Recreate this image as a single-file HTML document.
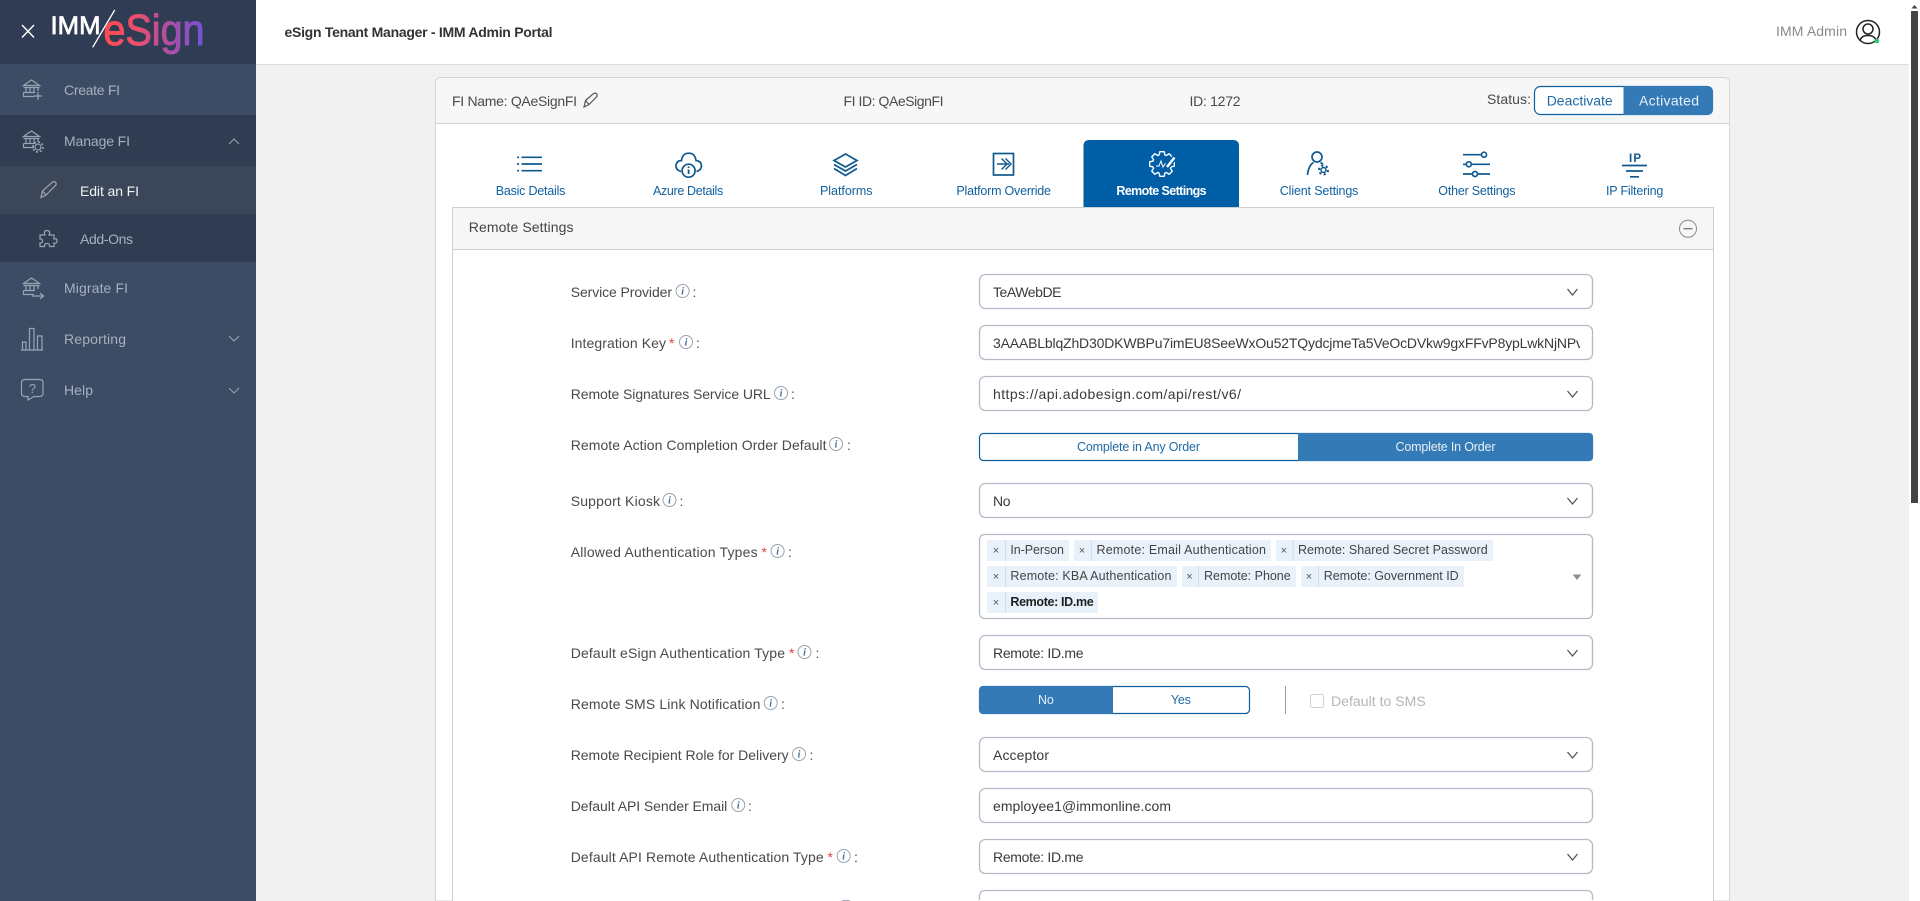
<!DOCTYPE html>
<html lang="en">
<head>
<meta charset="utf-8">
<title>eSign Tenant Manager - IMM Admin Portal</title>
<style>
html,body{margin:0;padding:0;width:1920px;height:901px;overflow:hidden;background:#f1f1f1}
svg{display:block}
text{font-family:"Liberation Sans",sans-serif}
.nav{font-size:14px;fill:#a6b0bf}
.lab{font-size:14px;fill:#4a4a4a}
.inp{font-size:14px;fill:#3a3a3a}
.tab{font-size:12.5px;fill:#11609f}
.tag{font-size:12.5px;fill:#444}
.x{font-size:11px;fill:#555;text-anchor:middle}
.box{fill:#fff;stroke:#b7bac6;stroke-width:1.3}
.chev{fill:none;stroke:#555;stroke-width:1.3}
.ic{fill:none;stroke:#9aa5b4;stroke-width:1.2}
.tb{fill:none;stroke:#10598f;stroke-width:1.7}
.info circle{fill:#fff;stroke:#9aa3ad;stroke-width:1}
.info text{font-size:10px;font-style:italic;font-weight:bold;fill:#3f6f9f;text-anchor:middle;font-family:"Liberation Serif",serif}
.star{font-size:14px;fill:#e04040}
</style>
</head>
<body>
<svg width="1920" height="901" viewBox="0 0 1920 901" xmlns="http://www.w3.org/2000/svg">
<defs>
<linearGradient id="lg" x1="104" y1="0" x2="205" y2="0" gradientUnits="userSpaceOnUse">
<stop offset="0" stop-color="#ff4a50"/><stop offset=".35" stop-color="#e64f6e"/><stop offset=".65" stop-color="#aa4fa6"/><stop offset="1" stop-color="#6e52d8"/>
</linearGradient>
<clipPath id="kc"><rect x="985" y="326" width="595" height="34"/></clipPath>
<g id="bank" fill="none" stroke="#9aa5b4" stroke-width="1.2">
<path d="M1.5 6.5 L9.5 1 L17.5 6.5 Z"/><path d="M1.5 8.5H17.5M4 8.5V13.5M8 8.5V13.5M12 8.5V13.5M16 8.5V12M1.5 13.5H13M1.5 13.5V17.5H12"/>
</g>
<g id="i" class="info"><circle cx="0" cy="0" r="6.5"/><text x="0" y="3.5">i</text></g>
<path id="ch" class="chev" d="M-5 -3 L0 3 L5 -3"/>
</defs>

<!-- page -->
<rect width="1920" height="901" fill="#f1f1f1"/>
<rect x="256" y="0" width="1653" height="64" fill="#fff"/>
<rect x="256" y="64" width="1653" height="1" fill="#d9dce1"/>
<rect x="1909" y="0" width="11" height="901" fill="#fff"/>
<rect x="1911" y="11" width="7" height="492" fill="#444"/>
<path d="M1914.5 5 L1911.5 8.5 H1917.5Z" fill="#444"/>

<!-- sidebar -->
<rect width="256" height="901" fill="#3c4c64"/>
<rect width="256" height="64" fill="#303c54"/>
<rect y="115" width="256" height="147" fill="#2f3c51"/>
<rect y="166" width="256" height="48" fill="#3b4658"/>

<path d="M22 25 L34 37.5 M34 25 L22 37.5" stroke="#fff" stroke-width="1.4"/>
<text x="50.500" y="34" font-size="25" fill="#fff" stroke="#fff" stroke-width=".7" textLength="50" lengthAdjust="spacingAndGlyphs">IMM</text>
<path d="M114.700 10 L92.700 47.300" stroke="#fff" stroke-width="1.300"/>
<text x="103.500" y="45" font-size="44" fill="url(#lg)" stroke="url(#lg)" stroke-width="1" textLength="101" lengthAdjust="spacingAndGlyphs">eSign</text>

<use href="#bank" x="22" y="79"/>
<path class="ic" d="M38 92V100M34 96H42"/>
<text class="nav" x="64" y="95" textLength="56">Create FI</text>

<use href="#bank" x="22" y="130"/>
<circle class="ic" cx="38" cy="147" r="3"/><circle cx="38" cy="147" r="5" fill="none" stroke="#9aa5b4" stroke-width="1.6" stroke-dasharray="2 1.9"/>
<text class="nav" x="64" y="146" textLength="66">Manage FI</text>
<path d="M229 144 L234 139 L239 144" fill="none" stroke="#9aa5b4" stroke-width="1"/>

<path class="ic" d="M41 197.500 L42.500 191 L52.500 182 Q55 181 56 183 Q56.500 185 55 186 L46 195 Z M42.500 191 L46 195"/>
<text x="80" y="196" font-size="14" fill="#eef1f5" textLength="59">Edit an FI</text>

<path class="ic" d="M40 235 H45 Q43 230.500 47 230.500 Q51 230.500 49 235 H54 V239 Q57.500 238 57 241 Q56.500 244 54 243 V246.500 H49.500 Q50 243.500 47 243.500 Q44 243.500 44.500 246.500 H40 V243 Q43 243 42.500 240.500 Q42 238.500 40 239Z"/>
<text class="nav" x="80" y="244" textLength="53">Add-Ons</text>

<use href="#bank" x="22" y="277"/>
<path class="ic" d="M32 296H43M40 293L43.500 296L40 299"/>
<text class="nav" x="64" y="293" textLength="64">Migrate FI</text>

<path class="ic" d="M21 350H43M22.500 350V342H26V350M29.500 350V328.500H34V350M37.500 350V336H42V350"/>
<text class="nav" x="64" y="344" textLength="62">Reporting</text>
<path d="M229 336 L234 341 L239 336" fill="none" stroke="#9aa5b4" stroke-width="1"/>

<path class="ic" d="M25 379.500H39.500Q43 379.500 43 383V393Q43 396.500 39.500 396.500H34L28 400V396.500H25Q21.500 396.500 21.500 393V383Q21.500 379.500 25 379.500Z"/>
<text x="32.500" y="393" font-size="13" fill="#9aa5b4" text-anchor="middle">?</text>
<text class="nav" x="64" y="395" textLength="29">Help</text>
<path d="M229 388 L234 393 L239 388" fill="none" stroke="#9aa5b4" stroke-width="1"/>

<!-- header -->
<text x="284.500" y="37" font-size="14" font-weight="bold" fill="#333" textLength="268">eSign Tenant Manager - IMM Admin Portal</text>
<text x="1776" y="36" font-size="14" fill="#8a8a8a" textLength="71">IMM Admin</text>
<circle cx="1868" cy="32" r="11.500" fill="none" stroke="#222" stroke-width="1.500"/>
<circle cx="1868" cy="29" r="5" fill="none" stroke="#222" stroke-width="1.500"/>
<path d="M1860 41 Q1861 35.500 1868 35.500 Q1875 35.500 1876 41" fill="none" stroke="#222" stroke-width="1.500"/>
<circle cx="1877" cy="41" r="2.300" fill="#2ecc71"/>

<!-- card -->
<path d="M435.500 901V83.500Q435.500 77.500 441.500 77.500H1723.500Q1729.500 77.500 1729.500 83.500V901Z" fill="#fff" stroke="#d6d6d6"/>
<path d="M436 123V84Q436 78 442 78H1723.500Q1729 78 1729 84V123Z" fill="#f7f7f7"/>
<rect x="436" y="123" width="1294" height="1" fill="#d2d2d2"/>
<text class="lab" x="452" y="106" textLength="125">FI Name: QAeSignFI</text>
<path d="M584 107 L585.500 100.500 L593.500 93.500 Q596 92.500 597 94.500 Q597.500 96 596 97.500 L589 104.500 Z M585.500 100.500 L589 104.500" fill="none" stroke="#555" stroke-width="1.200"/>
<text class="lab" x="843.500" y="106" textLength="100">FI ID: QAeSignFI</text>
<text class="lab" x="1189.500" y="106" textLength="51">ID: 1272</text>
<text class="lab" x="1487" y="104" textLength="44">Status:</text>
<rect x="1534.500" y="86.500" width="178" height="28" rx="6" fill="#fff" stroke="#0f5f9f" stroke-width="1.200"/>
<path d="M1623.500 86H1707Q1713 86 1713 92V109Q1713 115 1707 115H1623.500Z" fill="#337ab7"/>
<text x="1546.700" y="105.500" font-size="14" fill="#1e6aa6" textLength="66">Deactivate</text>
<text x="1639" y="105.500" font-size="14" fill="#e8f0f7" textLength="60">Activated</text>

<!-- tabs -->
<path d="M1083.500 207V146Q1083.500 140 1089.500 140H1233Q1239 140 1239 146V207Z" fill="#005ea6"/>
<text class="tab" x="495.700" y="195" textLength="69.700">Basic Details</text>
<text class="tab" x="653" y="195" textLength="70.200">Azure Details</text>
<text class="tab" x="820" y="195" textLength="52.500">Platforms</text>
<text class="tab" x="956.400" y="195" textLength="94.600">Platform Override</text>
<text x="1116.400" y="195" font-size="12.500" font-weight="bold" fill="#fff" textLength="90.200">Remote Settings</text>
<text class="tab" x="1279.800" y="195" textLength="78.600">Client Settings</text>
<text class="tab" x="1438.300" y="195" textLength="77.200">Other Settings</text>
<text class="tab" x="1606" y="195" textLength="57.300">IP Filtering</text>

<!-- tab icons -->
<path class="tb" d="M521.500 157.300H542M521.500 164H542M521.500 170.700H542M517 157.300H519M517 164H519M517 170.700H519"/>
<path class="tb" d="M681 171.500 Q675.500 170 676 165 Q677 160.500 681.500 160.500 Q682.500 153.200 688.800 153.200 Q695 153.200 696 160.500 Q701 161 701.500 165.500 Q701.500 170 696.500 171.500"/>
<circle class="tb" cx="688.600" cy="170.700" r="6.500"/>
<path d="M688.600 169.500V174M688.600 166.500V168" stroke="#10598f" stroke-width="1.800" fill="none"/>
<path class="tb" d="M845.500 154 L857 160.500 L845.500 167 L834 160.500 Z M834 164.500 L845.500 171 L857 164.500 M834 168.500 L845.500 175.500 L857 168.500"/>
<rect class="tb" x="993.500" y="153.500" width="20" height="21.500"/>
<path d="M997 164H1009M1001.500 158.500L1007 164L1001.500 169.500M1005.500 158.500L1011 164L1005.500 169.500" fill="none" stroke="#10598f" stroke-width="1.400"/>
<!-- remote gear -->
<g transform="translate(1162,164)">
<path d="M-2.940 -9.040L-2.170 -12.310L2.170 -12.310L2.940 -9.040L4.310 -8.460L7.170 -10.240L10.240 -7.170L8.460 -4.310L9.040 -2.940L12.310 -2.170L12.310 2.170L9.040 2.940L8.460 4.310L10.240 7.170L7.170 10.240L4.310 8.460L2.940 9.040L2.170 12.310L-2.170 12.310L-2.940 9.040L-4.310 8.460L-7.170 10.240L-10.240 7.170L-8.460 4.310L-9.040 2.940L-12.310 2.170L-12.310 -2.170L-9.040 -2.940L-8.460 -4.310L-10.240 -7.170L-7.170 -10.240L-4.310 -8.460Z" fill="none" stroke="#fff" stroke-width="1.400" stroke-linejoin="round"/>
<path d="M-6 2 H-3 L-1 -3 L1 3 L3 0 H5" fill="none" stroke="#fff" stroke-width="1"/>
<path d="M5 3 L13 -7" fill="none" stroke="#005ea6" stroke-width="5.500"/>
<path d="M5 3 L12.500 -6.500" fill="none" stroke="#fff" stroke-width="2.400"/>
</g>
<!-- client -->
<circle class="tb" cx="1317" cy="157" r="5"/>
<path class="tb" d="M1307.500 175 Q1308.500 165.500 1313.500 162.500 M1320.500 162.500 L1323 164"/>
<circle cx="1323.500" cy="170" r="2.500" fill="none" stroke="#10598f" stroke-width="1.500"/>
<circle cx="1323.500" cy="170" r="4.500" fill="none" stroke="#10598f" stroke-width="2" stroke-dasharray="2.200 2.500"/>
<!-- sliders -->
<path class="tb" d="M1463 154.700H1481M1463 164.300H1466M1472 164.300H1490M1463 174H1472M1478 174H1490"/>
<circle class="tb" cx="1484" cy="154.700" r="2.500"/><circle class="tb" cx="1468.800" cy="164.300" r="2.500"/><circle class="tb" cx="1475" cy="174" r="2.500"/>
<!-- ip -->
<text x="1635" y="162" font-size="11.500" font-weight="bold" fill="#10598f" text-anchor="middle" textLength="12">IP</text>
<path class="tb" d="M1622 165.500H1647M1626 171H1643M1630 176.800H1639"/>

<!-- panel -->
<path d="M452.500 901V207.500H1713.500V901" fill="#fff" stroke="#cfcfcf"/>
<rect x="453" y="208" width="1260" height="41" fill="#f6f6f6"/>
<rect x="452" y="249" width="1262" height="1" fill="#cfcfcf"/>
<text x="468.800" y="232" font-size="14" fill="#444" textLength="104.700">Remote Settings</text>
<circle cx="1688" cy="228.700" r="8.500" fill="none" stroke="#8a8a8a" stroke-width="1"/>
<path d="M1683.500 228.700H1692.500" stroke="#777" stroke-width="1.300"/>

<!-- labels -->
<text class="lab" x="570.700" y="297" textLength="101.300">Service Provider</text>
<use href="#i" x="682.600" y="291"/><text class="lab" x="692.500" y="297">:</text>

<text class="lab" x="570.700" y="348" textLength="95.300">Integration Key</text>
<text class="star" x="669" y="348">*</text>
<use href="#i" x="686" y="342"/><text class="lab" x="696" y="348">:</text>

<text class="lab" x="570.700" y="399" textLength="200">Remote Signatures Service URL</text>
<use href="#i" x="781" y="393"/><text class="lab" x="791" y="399">:</text>

<text class="lab" x="570.700" y="450" textLength="255.800">Remote Action Completion Order Default</text>
<use href="#i" x="836" y="444"/><text class="lab" x="847" y="450">:</text>

<text class="lab" x="570.700" y="506" textLength="89.300">Support Kiosk</text>
<use href="#i" x="669.500" y="500"/><text class="lab" x="679.500" y="506">:</text>

<text class="lab" x="570.700" y="557" textLength="186.900">Allowed Authentication Types</text>
<text class="star" x="761.500" y="557">*</text>
<use href="#i" x="777.600" y="551"/><text class="lab" x="788" y="557">:</text>

<text class="lab" x="570.700" y="658" textLength="214.300">Default eSign Authentication Type</text>
<text class="star" x="789" y="658">*</text>
<use href="#i" x="804.500" y="652"/><text class="lab" x="815.500" y="658">:</text>

<text class="lab" x="570.700" y="709" textLength="189.700">Remote SMS Link Notification</text>
<use href="#i" x="770.700" y="703"/><text class="lab" x="781" y="709">:</text>

<text class="lab" x="570.700" y="760" textLength="217.900">Remote Recipient Role for Delivery</text>
<use href="#i" x="799" y="754"/><text class="lab" x="809.500" y="760">:</text>

<text class="lab" x="570.700" y="811" textLength="156.600">Default API Sender Email</text>
<use href="#i" x="738.300" y="805"/><text class="lab" x="748" y="811">:</text>

<text class="lab" x="570.700" y="862" textLength="253">Default API Remote Authentication Type</text>
<text class="star" x="827.500" y="862">*</text>
<use href="#i" x="843.700" y="856"/><text class="lab" x="854" y="862">:</text>

<path d="M842 901 Q846 899.500 850 901" fill="none" stroke="#9aa3ad"/>

<!-- controls -->
<rect class="box" x="979.500" y="274.500" width="613" height="34" rx="6"/>
<text class="inp" x="993" y="297" textLength="68.500">TeAWebDE</text>
<use href="#ch" x="1572.500" y="292"/>

<rect class="box" x="979.500" y="325.500" width="613" height="34" rx="6"/>
<g clip-path="url(#kc)"><text class="inp" x="993" y="348" textLength="590">3AAABLblqZhD30DKWBPu7imEU8SeeWxOu52TQydcjmeTa5VeOcDVkw9gxFFvP8ypLwkNjNPv</text></g>

<rect class="box" x="979.500" y="376.500" width="613" height="34" rx="6"/>
<text class="inp" x="993" y="399" textLength="248">https://api.adobesign.com/api/rest/v6/</text>
<use href="#ch" x="1572.500" y="394"/>

<!-- order toggle -->
<rect x="979.500" y="433.500" width="613" height="27" rx="4" fill="#fff" stroke="#0f5f9f" stroke-width="1.200"/>
<path d="M1298 433H1589Q1593 433 1593 437V457Q1593 461 1589 461H1298Z" fill="#337ab7"/>
<text x="1077" y="451" font-size="12.500" fill="#1f6aa5" textLength="123">Complete in Any Order</text>
<text x="1395.500" y="451" font-size="12.500" fill="#e8f0f7" textLength="100">Complete In Order</text>

<rect class="box" x="979.500" y="483.500" width="613" height="34" rx="6"/>
<text class="inp" x="993" y="506" textLength="17.500">No</text>
<use href="#ch" x="1572.500" y="501"/>

<!-- multi -->
<rect class="box" x="979.500" y="534.500" width="613" height="84" rx="5"/>
<g fill="#e9f2fb">
<rect x="987" y="540" width="82" height="21"/><rect x="1074" y="540" width="196.700" height="21"/><rect x="1276" y="540" width="217" height="21"/>
<rect x="987" y="566" width="190" height="21"/><rect x="1182" y="566" width="114" height="21"/><rect x="1301" y="566" width="163" height="21"/>
<rect x="987" y="592" width="111" height="21"/>
</g>
<g fill="#cfe0f2">
<rect x="1005" y="540" width="1" height="21"/><rect x="1091" y="540" width="1" height="21"/><rect x="1292.700" y="540" width="1" height="21"/>
<rect x="1005" y="566" width="1" height="21"/><rect x="1198" y="566" width="1" height="21"/><rect x="1318" y="566" width="1" height="21"/>
<rect x="1005" y="592" width="1" height="21"/>
</g>
<text class="x" x="996" y="554">×</text><text class="x" x="1082" y="554">×</text><text class="x" x="1283.800" y="554">×</text>
<text class="x" x="996" y="580">×</text><text class="x" x="1189.500" y="580">×</text><text class="x" x="1309" y="580">×</text>
<text class="x" x="996" y="606">×</text>
<text class="tag" x="1010.400" y="554" textLength="53.600">In-Person</text>
<text class="tag" x="1096.500" y="554" textLength="169.500">Remote: Email Authentication</text>
<text class="tag" x="1298" y="554" textLength="189.700">Remote: Shared Secret Password</text>
<text class="tag" x="1010.400" y="580" textLength="161">Remote: KBA Authentication</text>
<text class="tag" x="1204" y="580" textLength="86.700">Remote: Phone</text>
<text class="tag" x="1323.700" y="580" textLength="135">Remote: Government ID</text>
<text class="tag" x="1010.400" y="606" font-weight="bold" style="fill:#222" textLength="83.300">Remote: ID.me</text>
<path d="M1572.800 574.500H1581.300L1577 580Z" fill="#8a8f96"/>

<rect class="box" x="979.500" y="635.500" width="613" height="34" rx="6"/>
<text class="inp" x="993" y="658" textLength="90.500">Remote: ID.me</text>
<use href="#ch" x="1572.500" y="653"/>

<!-- sms toggle -->
<rect x="979.500" y="686.500" width="270" height="27" rx="4" fill="#fff" stroke="#0f5f9f" stroke-width="1.200"/>
<path d="M1113 686H983.500Q979 686 979 690.500V709.500Q979 714 983.500 714H1113Z" fill="#337ab7"/>
<text x="1038" y="704" font-size="12.500" fill="#e8f0f7" textLength="15.800">No</text>
<text x="1170.900" y="704" font-size="12.500" fill="#1f6aa5" textLength="20">Yes</text>
<rect x="1285" y="686" width="1" height="28" fill="#9aa0a6"/>
<rect x="1310.500" y="694.500" width="13" height="13" rx="2" fill="#fff" stroke="#d0d0d0"/>
<text x="1331" y="706" font-size="14" fill="#b5b5b5" textLength="94.700">Default to SMS</text>

<rect class="box" x="979.500" y="737.500" width="613" height="34" rx="6"/>
<text class="inp" x="993" y="760" textLength="56">Acceptor</text>
<use href="#ch" x="1572.500" y="755"/>

<rect class="box" x="979.500" y="788.500" width="613" height="34" rx="6"/>
<text class="inp" x="993" y="811" textLength="178">employee1@immonline.com</text>

<rect class="box" x="979.500" y="839.500" width="613" height="34" rx="6"/>
<text class="inp" x="993" y="862" textLength="90.500">Remote: ID.me</text>
<use href="#ch" x="1572.500" y="857"/>

<path class="box" d="M979.500 901V896.500Q979.500 890.500 985.500 890.500H1586.500Q1592.500 890.500 1592.500 896.500V901Z"/>
<rect x="979" y="900" width="614" height="1" fill="#fff"/>
</svg>
</body>
</html>
